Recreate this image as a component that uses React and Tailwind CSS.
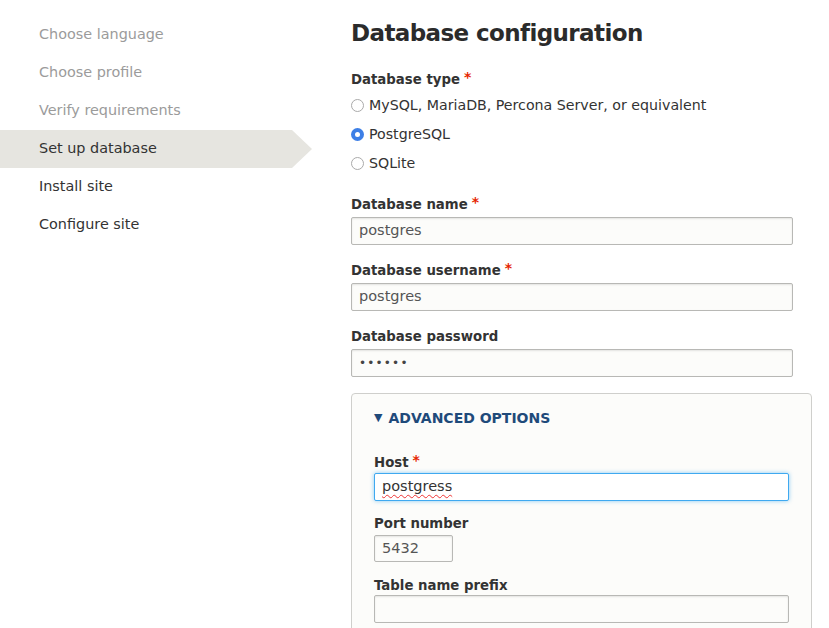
import React from "react";

const steps = [
  { label: "Choose language", state: "done" },
  { label: "Choose profile", state: "done" },
  { label: "Verify requirements", state: "done" },
  { label: "Set up database", state: "active" },
  { label: "Install site", state: "todo" },
  { label: "Configure site", state: "todo" },
];

function Req() {
  return <span className="ml-[4px] text-[#e62600] text-[14px] leading-none relative top-[-3px]">*</span>;
}

function Label({ children, required }) {
  return (
    <div className="h-[20px] pt-[2px] flex items-center text-[13.3px] font-bold text-[#333]">
      {children}
      {required && <Req />}
    </div>
  );
}

function TextInput({ value, width = "w-[442px]", height = "h-[28px]", focus, wavy }) {
  return (
    <div
      className={`${width} ${height} flex items-center px-[7px] rounded-[2px] text-[14.5px] ${
        focus
          ? "bg-white border border-[#3fa9f0] shadow-[0_0_4px_rgba(64,170,240,0.6)] text-[#333]"
          : "bg-[#fcfcfa] border border-[#b8b8b5] shadow-[inset_0_1px_2px_rgba(0,0,0,0.1)] text-[#555]"
      }`}
    >
      <span className={wavy ? "underline decoration-wavy decoration-[#e33] decoration-1 underline-offset-[3px]" : ""}>
        {value}
      </span>
    </div>
  );
}

function Radio({ label, checked }) {
  return (
    <div className="h-[29px] flex items-center text-[14.2px] text-[#333]">
      {checked ? (
        <span className="w-[13px] h-[13px] rounded-full bg-[#3d7fe6] flex items-center justify-center mr-[5px]">
          <span className="w-[5px] h-[5px] rounded-full bg-white" />
        </span>
      ) : (
        <span className="w-[13px] h-[13px] rounded-full border border-[#aaa] bg-white mr-[5px]" />
      )}
      {label}
    </div>
  );
}

export default function App() {
  return (
    <div className="w-[829px] h-[628px] overflow-hidden bg-white flex font-['DejaVu_Sans',sans-serif]">
      <div className="w-[351px] shrink-0 pt-[16px]">
        {steps.map((s) => (
          <div
            key={s.label}
            className={`h-[38px] flex items-center pl-[39px] text-[14.4px] ${
              s.state === "done" ? "text-[#9b9b9b]" : "text-[#333]"
            } ${
              s.state === "active"
                ? "w-[312px] bg-[#e6e5e0] [clip-path:polygon(0_0,292px_0,312px_50%,292px_100%,0_100%)]"
                : ""
            }`}
          >
            {s.label}
          </div>
        ))}
      </div>

      <div className="flex-1 pt-[16px]">
        <h1 className="text-[23px] font-bold text-[#2b2b2b] tracking-[-0.6px] leading-[34px]">
          Database configuration
        </h1>

        <div className="mt-[19px]">
          <Label required>Database type</Label>
          <div className="mt-[2px]">
            <Radio label="MySQL, MariaDB, Percona Server, or equivalent" />
            <Radio label="PostgreSQL" checked />
            <Radio label="SQLite" />
          </div>
        </div>

        <div className="mt-[16px]">
          <Label required>Database name</Label>
          <div className="mt-[3px]">
            <TextInput value="postgres" />
          </div>
        </div>

        <div className="mt-[15px]">
          <Label required>Database username</Label>
          <div className="mt-[3px]">
            <TextInput value="postgres" />
          </div>
        </div>

        <div className="mt-[15px]">
          <Label>Database password</Label>
          <div className="mt-[3px]">
            <TextInput value={<span className="tracking-[1.2px] text-[12px] text-[#444]">••••••</span>} />
          </div>
        </div>

        <div className="mt-[16px] w-[461px] h-[300px] border border-[#cfcfcc] rounded-[4px] bg-[#fcfcfa] px-[22px] pt-[14px]">
          <div className="h-[20px] flex items-center text-[14px] font-bold text-[#1f4a7a] uppercase">
            <span className="text-[11px] mr-[6px]">▼</span>
            Advanced options
          </div>

          <div className="mt-[24px]">
            <Label required>Host</Label>
            <div className="mt-[1px]">
              <TextInput value="postgress" width="w-[415px]" focus wavy />
            </div>
          </div>

          <div className="mt-[12px]">
            <Label>Port number</Label>
            <div className="mt-[2px]">
              <TextInput value="5432" width="w-[79px]" height="h-[27px]" />
            </div>
          </div>

          <div className="mt-[13px]">
            <Label>Table name prefix</Label>
            <div className="mt-[0px]">
              <TextInput value="" width="w-[415px]" />
            </div>
          </div>
        </div>
      </div>
    </div>
  );
}
